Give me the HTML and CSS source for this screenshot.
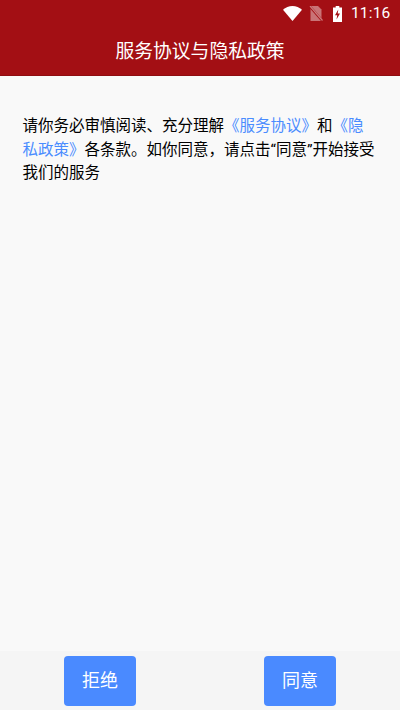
FILE: index.html
```html
<!DOCTYPE html>
<html lang="zh-CN">
<head>
<meta charset="utf-8">
<title>服务协议与隐私政策</title>
<link rel="stylesheet" href="styles.css">
</head>
<body>
<div class="page">
  <header class="top">
    <div class="status">
      <svg class="ic-wifi" width="19" height="15" viewBox="0 0 19 15"><path d="M0 3.700C2.600 1.400 5.900 0 9.500 0s6.900 1.400 9.500 3.700L9.500 15z" fill="#fff"/></svg>
      <svg class="ic-sim" width="14" height="15" viewBox="0 0 14 15"><path d="M1.500 0h7.500L12.500 3.500V15H1.500z" fill="#fff" fill-opacity=".42"/><path d="M0.500 0L13.500 15" stroke="#a30f14" stroke-width="2.400"/><path d="M1 0L13.500 14.500" stroke="#fff" stroke-opacity=".45" stroke-width="1.200"/></svg>
      <svg class="ic-bat" width="9" height="16" viewBox="0 0 9 16"><path d="M2.700 0h3.600v1.500H9V16H0V1.500h2.700z" fill="#fff"/><path d="M5.300 3.500L2 9.300h2.200L3.500 13.500l3.500-6H4.700z" fill="#a30f14"/></svg>
      <span class="time">11:16</span>
    </div>
    <h1 class="title">服务协议与隐私政策</h1>
  </header>
  <main class="content">
    <p class="notice">请你务必审慎阅读、充分理解<a class="link">《服务协议》</a>和<a class="link">《隐私政策》</a>各条款。如你同意，请点击“同意”开始接受我们的服务</p>
  </main>
  <footer class="actions">
    <button class="btn">拒绝</button>
    <button class="btn">同意</button>
  </footer>
</div>
</body>
</html>
```
FILE: styles.css
```css
* { box-sizing: border-box; }
html, body { margin: 0; padding: 0; }
body {
  font-family: "Noto Sans CJK SC", "Roboto", sans-serif;
  background: #f9f9f9;
}
.page {
  width: 400px;
  height: 710px;
  display: flex;
  flex-direction: column;
  overflow: hidden;
}
.top {
  height: 76px;
  background: #a30f14;
  color: #fff;
  flex: none;
  border-bottom: 1px solid #8f0d11;
}
.status {
  height: 27px;
  margin-bottom: -2px;
  display: flex;
  align-items: center;
  justify-content: flex-end;
  padding-right: 9.500px;
}
.ic-wifi { margin-right: 7px; }
.ic-sim { margin-right: 10px; }
.ic-bat { margin-right: 9px; }
.time {
  font-family: "Roboto", sans-serif;
  font-size: 15.500px;
  letter-spacing: 0.200px;
  line-height: 27px;
}
.title {
  margin: 0;
  height: 50px;
  line-height: 50px;
  text-align: center;
  font-size: 18.800px;
  font-weight: 400;
}
.content {
  flex: 1;
  padding: 39px 22.500px 0;
}
.notice {
  margin: 0;
  font-family: "Roboto", "Noto Sans CJK SC", sans-serif;
  font-size: 15.500px;
  line-height: 23.500px;
  color: #000;
}
.link { color: #4a8cff; }
.actions {
  flex: none;
  height: 59px;
  background: #f5f5f5;
  display: flex;
  justify-content: space-around;
  padding-top: 5px;
}
.btn {
  width: 71.500px;
  height: 50px;
  border: 0;
  border-radius: 4px;
  background: #4a8aff;
  color: #fff;
  font-family: inherit;
  font-size: 18px;
  padding: 0 0 4px;
}
```
